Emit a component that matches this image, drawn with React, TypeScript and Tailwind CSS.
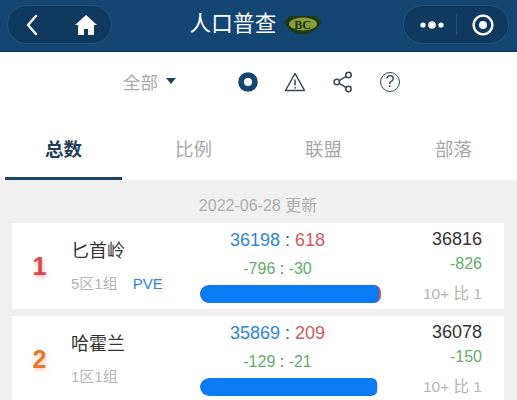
import React from 'react';

const cjk = "font-['Liberation_Sans','Noto_Sans_CJK_SC',sans-serif]";

const servers = [
  {
    rank: '1',
    rankColor: 'text-[#d9474a]',
    glow: '[text-shadow:1px_2px_4px_rgba(217,71,74,0.4)]',
    name: '匕首岭',
    zone: '5区1组',
    tag: 'PVE',
    alliance: '36198',
    horde: '618',
    allianceDelta: '-796',
    hordeDelta: '-30',
    total: '36816',
    totalDelta: '-826',
    ratio: '10+ 比 1',
    barWidth: 'w-[181px]',
    blueWidth: 'w-[179px]',
    endColor: 'bg-[#d9545a]',
  },
  {
    rank: '2',
    rankColor: 'text-[#e0792e]',
    glow: '[text-shadow:1px_2px_4px_rgba(224,121,46,0.4)]',
    name: '哈霍兰',
    zone: '1区1组',
    tag: '',
    alliance: '35869',
    horde: '209',
    allianceDelta: '-129',
    hordeDelta: '-21',
    total: '36078',
    totalDelta: '-150',
    ratio: '10+ 比 1',
    barWidth: 'w-[178px]',
    blueWidth: 'w-[177px]',
    endColor: 'bg-[#f0c4c8]',
  },
];

const tabs = ['总数', '比例', '联盟', '部落'];

const Header = () => (
  <header className="flex h-[52px] items-start justify-between border-b border-[#0f3553] bg-[#134672] pl-[7px] pr-[8px] pt-[5px]">
    <div className="flex h-[39px] w-[105px] items-center rounded-full border border-[#1f5480] bg-[#10395f]">
      <svg width="14" height="22" viewBox="0 0 14 22" className="ml-[17px]" fill="none" stroke="white" strokeWidth="2.4" strokeLinecap="round" strokeLinejoin="round">
        <path d="M11 2 3 11l8 9" />
      </svg>
      <svg width="22" height="20" viewBox="0 0 22 20" className="ml-[36px]" fill="white">
        <path d="M11 0 0 10h3v10h6v-6h4v6h6V10h3z" />
      </svg>
    </div>
    <div className="flex h-[39px] items-center gap-[6px] pr-[3px]">
      <span className={`${cjk} text-[21.5px] tracking-[0.3px] text-white`}>人口普查</span>
      <div className="relative flex h-[20px] w-[40px] items-center justify-center">
        <svg width="40" height="20" viewBox="0 0 40 20" className="absolute inset-0">
          <polygon points="1,7 7,1 33,1 39,7 33,14 25,19 14,19 6,14" fill="#1d3a12" />
          <ellipse cx="20" cy="9" rx="14" ry="6.5" fill="#8d9c3d" />
        </svg>
        <span className="relative font-['Liberation_Serif',serif] text-[12px] font-bold leading-none text-[#16300c]">BC</span>
      </div>
    </div>
    <div className="flex h-[39px] w-[106px] items-center rounded-full border border-[#1f5480] bg-[#10395f]">
      <svg width="24" height="10" viewBox="0 0 24 10" className="ml-4" fill="white">
        <circle cx="3" cy="5" r="2.6" />
        <circle cx="12" cy="5" r="3.8" />
        <circle cx="21" cy="5" r="2.6" />
      </svg>
      <div className="ml-[12px] h-[21px] w-px bg-[#1f5480]" />
      <svg width="22" height="22" viewBox="0 0 22 22" className="ml-[15px]" fill="none">
        <circle cx="11" cy="11" r="9.4" stroke="white" strokeWidth="2.4" />
        <circle cx="11" cy="11" r="4" fill="white" />
      </svg>
    </div>
  </header>
);

const Toolbar = () => (
  <div className="flex h-[60px] items-center pl-[123px]">
    <span className={`${cjk} pt-[3px] text-[17.5px] text-[#a8a8a8]`}>全部</span>
    <svg width="10" height="6" viewBox="0 0 10 6" className="ml-2 mb-[3px]" fill="#24425f">
      <path d="M0 0h10L5 6z" />
    </svg>
    <svg width="20" height="20" viewBox="0 0 20 20" className="ml-[62px]">
      <circle cx="10" cy="10" r="9.8" fill="#154670" />
      <circle cx="10" cy="10" r="4" fill="white" />
    </svg>
    <svg width="22" height="20" viewBox="0 0 22 20" className="ml-[26px]" fill="none" stroke="#33475a" strokeWidth="1.5" strokeLinejoin="round">
      <path d="M11 1.5 1.5 18.5h19z" />
      <path d="M11 7.5v6M11 15v1.6" />
    </svg>
    <svg width="20" height="22" viewBox="0 0 20 22" className="ml-[27px]" fill="none" stroke="#33475a" strokeWidth="1.5">
      <circle cx="15.5" cy="4" r="2.7" />
      <circle cx="3.8" cy="11" r="2.7" />
      <circle cx="15.5" cy="18" r="2.7" />
      <path d="M6.2 9.6 13.2 5.4M6.2 12.4l7 4.2" />
    </svg>
    <div className={`${cjk} ml-[27px] flex h-[20px] w-[20px] items-center justify-center rounded-full border-[1.5px] border-[#33475a] text-[16px] leading-none text-[#33475a]`}>
      ?
    </div>
  </div>
);

const Tabs = () => (
  <nav className="mt-[15px] grid h-[53px] grid-cols-4 gap-x-[13px] px-[5px]">
    {tabs.map((tab, index) => (
      <div key={tab} className="relative flex items-center justify-center pb-[7px]">
        <span className={`${cjk} text-[18.5px] ${index === 0 ? 'font-bold text-[#1f3d58]' : 'text-[#a8a8a8]'}`}>{tab}</span>
        {index === 0 && <div className="absolute bottom-0 left-0 h-[3px] w-full bg-[#1f4566]" />}
      </div>
    ))}
  </nav>
);

const ServerCard = ({ server }: { server: (typeof servers)[number] }) => (
  <div className="flex h-[86px] bg-white">
    <div className={`flex w-[55px] shrink-0 items-center justify-center pt-[2px] font-['Liberation_Sans',sans-serif] text-[25px] font-bold ${server.rankColor} ${server.glow}`}>
      {server.rank}
    </div>
    <div className="ml-[4px] w-[129px] shrink-0 pt-[15px]">
      <div className={`${cjk} text-[18px] leading-[26px] text-[#333333]`}>{server.name}</div>
      <div className={`${cjk} mt-[10px] flex gap-[15px] text-[15px] leading-[20px]`}>
        <span className="text-[#b4b4b4]">{server.zone}</span>
        {server.tag && <span className="text-[#2f86cf]">{server.tag}</span>}
      </div>
    </div>
    <div className="flex w-[181px] shrink-0 flex-col items-center pt-[6px]">
      <div className={`${cjk} mr-[26px] text-[18px] leading-[22px]`}>
        <span className="text-[#2f86d6]">{server.alliance}</span>
        <span className="text-[#555555]"> : </span>
        <span className="text-[#d45a5a]">{server.horde}</span>
      </div>
      <div className={`${cjk} mr-[26px] mt-[8px] text-[16px] leading-[20px] text-[#5fae6a]`}>
        {server.allianceDelta}
        <span className="text-[#666666]"> : </span>
        {server.hordeDelta}
      </div>
      <div className={`mt-[6px] h-[18px] self-start overflow-hidden rounded-l-[9px] rounded-r-[7px] ${server.barWidth} ${server.endColor}`}>
        <div className={`h-full rounded-l-[9px] rounded-r-[5px] bg-[#0a7bf2] ${server.blueWidth}`} />
      </div>
    </div>
    <div className="flex flex-1 flex-col items-end pr-[22px] pt-[5px]">
      <div className={`${cjk} text-[18px] leading-[22px] text-[#333333]`}>{server.total}</div>
      <div className={`${cjk} mt-[4px] text-[16px] leading-[20px] text-[#5fae6a]`}>{server.totalDelta}</div>
      <div className={`${cjk} mt-[10px] text-[15.5px] leading-[20px] text-[#b4b4b4]`}>{server.ratio}</div>
    </div>
  </div>
);

const App = () => {
  return (
    <div className="h-[400px] w-[517px] overflow-hidden bg-white">
      <Header />
      <Toolbar />
      <Tabs />
      <main className="bg-[#f0f0f0] pl-[12px] pr-[13px] pb-4">
        <div className={`${cjk} flex h-[43px] items-center justify-center pt-[8px] text-[16px] text-[#adadad]`}>
          2022-06-28 更新
        </div>
        <div className="flex flex-col gap-[7px]">
          {servers.map((server) => (
            <ServerCard key={server.rank} server={server} />
          ))}
        </div>
      </main>
    </div>
  );
};

export default App;
